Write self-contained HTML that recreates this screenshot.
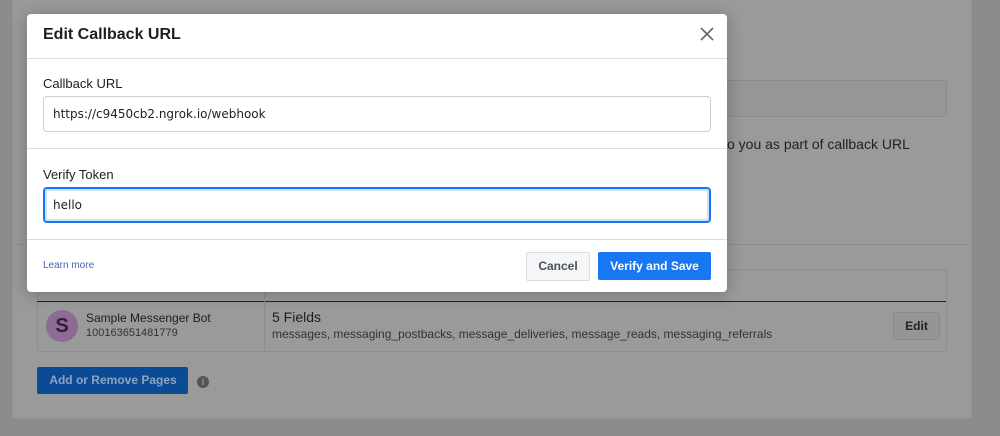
<!DOCTYPE html><html><head><style>
body{margin:0;width:1000px;height:436px;background:#8b8c8e;font-family:"Liberation Sans",sans-serif;position:relative;overflow:hidden}
.a{position:absolute}
</style></head><body>
<div class="a" style="left:12px;top:-2px;width:958px;height:419px;background:#999a9a;border:1px solid #909192;border-radius:3px"></div>
<div class="a" style="left:12px;top:244px;width:959px;height:1px;background:#8d8e8f"></div>
<div class="a" style="left:700px;top:80px;width:245px;height:35px;background:#959695;border:1px solid #8a8b8b;border-radius:4px"></div>
<div class="a" style="left:727px;top:136px;font-size:14px;color:#222">o you as part of callback URL</div>
<div class="a" style="left:37px;top:269px;width:908px;height:81px;border:1px solid #8c8d8d"></div>
<div class="a" style="left:37px;top:301px;width:909px;height:1px;background:#222"></div>
<div class="a" style="left:264px;top:269px;width:1px;height:82px;background:#8c8d8d"></div>
<div class="a" style="left:46px;top:310px;width:32px;height:32px;border-radius:50%;background:#8e6b94;color:#2e1d33;font-weight:bold;font-size:20px;text-align:center;line-height:32px">S</div>
<div class="a" style="left:86px;top:311px;font-size:12px;color:#1c1e21">Sample Messenger Bot</div>
<div class="a" style="left:86px;top:327px;font-size:11px;color:#333">100163651481779</div>
<div class="a" style="left:272px;top:309px;font-size:14px;color:#1c1e21">5 Fields</div>
<div class="a" style="left:272px;top:327px;font-size:12px;color:#333">messages, messaging_postbacks, message_deliveries, message_reads, messaging_referrals</div>
<div class="a" style="left:893px;top:312px;width:45px;height:26px;border:1px solid #888;background:#949596;border-radius:3px;font-size:12px;font-weight:bold;color:#222;text-align:center;line-height:26px">Edit</div>
<div class="a" style="left:37px;top:367px;width:151px;height:27px;background:#0b4a94;border-radius:2px;font-size:12px;font-weight:bold;color:#8ea3c0;text-align:center;line-height:27px;text-indent:1px">Add or Remove Pages</div>
<div class="a" style="left:196px;top:376px;width:12px;height:12px;border-radius:50%;background:#555;color:#999;font-size:9px;font-weight:bold;text-align:center;line-height:12px;margin-left:1px">i</div>

<div class="a" style="left:27px;top:14px;width:700px;height:278px;background:#fff;border-radius:4px;box-shadow:0 2px 16px rgba(0,0,0,.25)"></div>
<div class="a" style="left:43px;top:26px;font-size:16px;font-weight:bold;color:#1c1e21">Edit Callback URL</div>
<svg class="a" style="left:700px;top:27px" width="14" height="14"><path d="M1 1L13 13M13 1L1 13" stroke="#606770" stroke-width="1.6"/></svg>
<div class="a" style="left:27px;top:58px;width:700px;height:1px;background:#dadde1"></div>
<div class="a" style="left:43px;top:76px;font-size:13px;color:#1c1e21">Callback URL</div>
<div class="a" style="left:43px;top:96px;width:666px;height:34px;border:1px solid #ccd0d5;border-radius:4px;font-family:'DejaVu Sans',sans-serif;font-size:12px;color:#1c1e21;line-height:34px;text-indent:9px">https://c9450cb2.ngrok.io/webhook</div>
<div class="a" style="left:27px;top:148px;width:700px;height:1px;background:#dadde1"></div>
<div class="a" style="left:43px;top:167px;font-size:13px;color:#1c1e21">Verify Token</div>
<div class="a" style="left:43px;top:187px;width:664px;height:32px;border:2px solid #1877f2;box-shadow:inset 0 0 0 2px #cfe0fb;border-radius:4px;font-family:'DejaVu Sans',sans-serif;font-size:12px;color:#1c1e21;line-height:32px;text-indent:8px">hello</div>
<div class="a" style="left:27px;top:239px;width:700px;height:1px;background:#dadde1"></div>
<div class="a" style="left:43px;top:260px;font-size:10px;color:#4267b2">Learn more</div>
<div class="a" style="left:526px;top:252px;width:62px;height:27px;border:1px solid #dadde1;background:#f5f6f7;border-radius:2px;font-size:12px;font-weight:bold;color:#4b4f56;text-align:center;line-height:27px">Cancel</div>
<div class="a" style="left:598px;top:252px;width:113px;height:28px;background:#1877f2;border-radius:2px;font-size:12px;font-weight:bold;color:#fff;text-align:center;line-height:28px">Verify and Save</div>
</body></html>
